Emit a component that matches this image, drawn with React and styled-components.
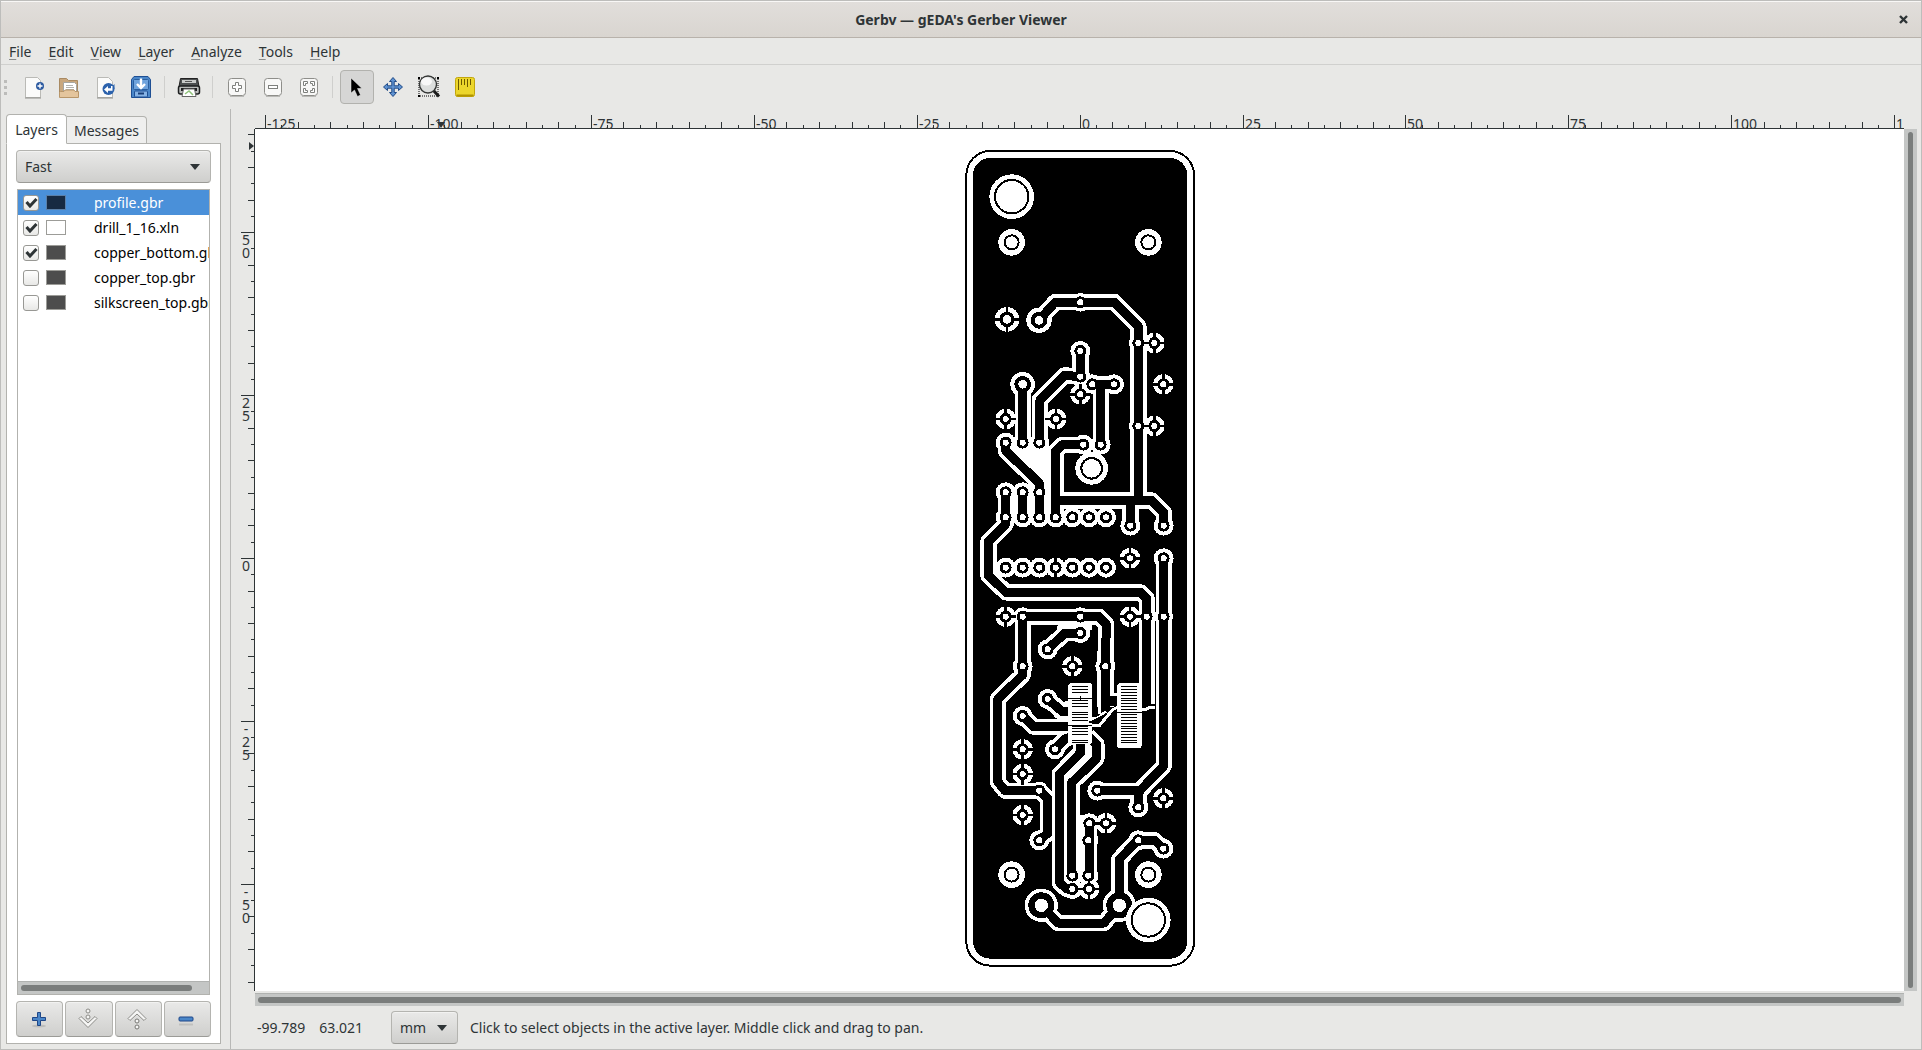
import React, { useState } from "react";
import styled, { createGlobalStyle, css } from "styled-components";

const GlobalStyle = createGlobalStyle`
  *, *::before, *::after { box-sizing: border-box; }
  html, body, #root { height: 100%; }
  body {
    margin: 0;
    overflow: hidden;
    font-family: "Noto Sans", "Open Sans", sans-serif;
    font-size: 14px;
    line-height: 20px;
    color: #2e3436;
  }
  button, select, input { font: inherit; color: inherit; margin: 0; }
`;

const line = "#b2b2ae";

const Window = styled.div`
  height: 100%;
  display: flex;
  flex-direction: column;
  background: #e8e8e6;
  border: 1px solid #bdbdbb;
`;

const TitleBar = styled.header`
  display: grid;
  grid-template-columns: 36px 1fr 36px;
  align-items: center;
  height: 37px;
  border-top: 1px solid #f8f7f6;
  border-bottom: 1px solid #b8b2ab;
  background: linear-gradient(#e1dedb, #d9d5d0);
`;

const Title = styled.h1`
  grid-column: 2;
  margin: 0;
  font-size: 14px;
  line-height: 20px;
  font-weight: 700;
  text-align: center;
`;

const CloseButton = styled.button`
  display: flex;
  align-items: center;
  justify-content: center;
  height: 32px;
  padding: 0;
  border: 0;
  background: none;
`;

const MenuBar = styled.nav`
  display: flex;
  gap: 1px;
  height: 27px;
  align-items: center;
  border-bottom: 1px solid #d0d0ce;
`;

const MenuButton = styled.button`
  padding: 4px 8px 2px;
  border: 0;
  background: none;
`;

const Mnemonic = styled.u`
  text-decoration-color: #8a8d8d;
  text-decoration-thickness: 1px;
  text-underline-offset: 2px;
`;

const ToolBar = styled.div`
  display: flex;
  align-items: center;
  height: 44px;
`;

const Grip = styled.div`
  display: grid;
  gap: 3px;
  width: 14px;
  padding-left: 3px;
`;

const GripDot = styled.span`
  width: 3px;
  height: 3px;
  background: #bcbcba;
`;

const ToolButton = styled.button`
  display: flex;
  align-items: center;
  justify-content: center;
  width: 34px;
  height: 34px;
  margin: 0 1px;
  padding: 0;
  border: 1px solid ${(p) => (p.$active ? line : "transparent")};
  border-radius: 4px;
  background: ${(p) => (p.$active ? "#d6d6d5" : "none")};
`;

const ToolSeparator = styled.span`
  width: 1px;
  height: 22px;
  margin: 0 6px 0 5px;
  background: #cfcfcd;
`;

const Body = styled.div`
  flex: 1;
  min-height: 0;
  display: grid;
  grid-template-columns: 230px 1fr;
`;

const SidePanel = styled.aside`
  display: flex;
  flex-direction: column;
  min-height: 0;
  padding: 5px 9px 5px 5px;
  border-right: 1px solid #b8b8b6;
`;

const TabStrip = styled.div`
  display: flex;
  align-items: flex-end;
  height: 30px;
  margin-bottom: -1px;
  z-index: 1;
`;

const Tab = styled.button`
  height: ${(p) => (p.$active ? 30 : 28)}px;
  width: ${(p) => p.$width}px;
  padding: 2px 0 0;
  border: 1px solid ${line};
  border-bottom-color: ${(p) => (p.$active ? "#fff" : line)};
  border-left-width: ${(p) => (p.$active ? 1 : 0)}px;
  border-radius: ${(p) => (p.$active ? "4px 4px 0 0" : "0 4px 0 0")};
  background: ${(p) => (p.$active ? "#fff" : "#efefee")};
`;

const TabPage = styled.section`
  flex: 1;
  min-height: 0;
  display: flex;
  flex-direction: column;
  gap: 6px;
  padding: 6px 9px;
  border: 1px solid ${line};
  background: #fff;
`;

const raised = css`
  border: 1px solid #b4b4b0;
  border-bottom-color: #9b9b97;
  border-radius: 4px;
  background: linear-gradient(#e9e9e8, #cfcfcd);
  box-shadow: inset 0 1px 0 #f2f2f1;
`;

const ComboBox = styled.span`
  position: relative;
  display: inline-flex;
`;

const ComboSelect = styled.select`
  ${raised}
  appearance: none;
  width: ${(p) => p.$width};
  height: 33px;
  padding: 0 28px 0 8px;
`;

const ComboArrow = styled.svg`
  position: absolute;
  right: 11px;
  top: 14px;
  pointer-events: none;
`;

const ListFrame = styled.div`
  flex: 1;
  min-height: 0;
  display: flex;
  flex-direction: column;
  margin: 0 1px;
  border: 1px solid ${line};
`;

const LayerList = styled.ul`
  flex: 1;
  margin: 0;
  padding: 0;
  list-style: none;
  overflow: hidden;
`;

const LayerRow = styled.li`
  display: grid;
  grid-template-columns: 16px 20px 1fr;
  column-gap: 7px;
  align-items: center;
  height: 25px;
  padding-left: 5px;
  white-space: nowrap;
  color: ${(p) => (p.$selected ? "#fff" : "#000")};
  background: ${(p) => (p.$selected ? "#4a90d9" : "none")};
`;

const LayerName = styled.label`
  padding-left: 21px;
`;

const CheckHolder = styled.span`
  position: relative;
  display: flex;
`;

const CheckBox = styled.input`
  appearance: none;
  width: 16px;
  height: 16px;
  border: 1px solid #989894;
  border-radius: 3px;
  background: linear-gradient(#fff, #e8e8e6);
`;

const CheckMark = styled.svg`
  position: absolute;
  left: 2px;
  top: 2px;
  pointer-events: none;
`;

const Swatch = styled.button`
  height: 15px;
  padding: 0;
  border: 1px solid ${(p) => (p.$selected ? "#5a7fa8" : "#9c9c98")};
  background: ${(p) => p.$color};
`;

const ScrollTrack = styled.div`
  display: flex;
  background: #c4c6c5;
  border-top: ${(p) => (p.$vertical ? 0 : 1)}px solid #b0b2b0;
  padding: ${(p) => (p.$vertical ? "3px 4px" : "3px")};
  height: ${(p) => (p.$vertical ? "auto" : "13px")};
`;

const ScrollThumb = styled.div`
  flex: 1;
  margin-right: ${(p) => p.$rest || 0}px;
  border-radius: 3px;
  background: #7a7d7c;
`;

const ButtonRow = styled.div`
  display: grid;
  grid-template-columns: repeat(4, 1fr);
  gap: 2px;
`;

const ActionButton = styled.button`
  ${raised}
  display: flex;
  align-items: center;
  justify-content: center;
  height: 36px;
  padding: 0 2px 0 0;
`;

const Workspace = styled.main`
  display: flex;
  flex-direction: column;
  min-width: 0;
  min-height: 0;
  padding: 0 4px 0 10px;
`;

const Viewer = styled.div`
  flex: 1;
  min-height: 0;
  display: grid;
  grid-template-columns: 14px minmax(0, 1fr) 13px;
  grid-template-rows: 20px minmax(0, 1fr) 15px;
`;

const RulerX = styled.div`
  grid-area: 1 / 2;
  display: flex;
  justify-content: center;
  overflow: hidden;
  border-bottom: 1px solid #2e3436;
`;

const RulerY = styled.div`
  grid-area: 2 / 1;
  display: flex;
  align-items: center;
  overflow: hidden;
  border-right: 1px solid #2e3436;
`;

const RulerDrawing = styled.svg`
  flex: none;
  font-family: "Noto Sans", sans-serif;
  font-size: 14px;
  fill: #2e3436;
`;

const Canvas = styled.div`
  grid-area: 2 / 2;
  display: flex;
  align-items: center;
  justify-content: center;
  overflow: hidden;
  background: #fff;
`;

const BoardDrawing = styled.svg`
  flex: none;
`;

const SideScroll = styled(ScrollTrack)`
  grid-area: 2 / 3;
`;

const BottomScroll = styled(ScrollTrack)`
  grid-area: 3 / 2;
  align-self: end;
`;

const StatusBar = styled.footer`
  display: flex;
  align-items: center;
  height: 43px;
  padding-left: 16px;
`;

const Coordinates = styled.output`
  display: flex;
  gap: 14px;
  width: 134px;
`;

const StatusText = styled.span`
  padding-left: 12px;
`;

/* ---------- icons ---------- */

const Icon = ({ size = 24, children }) => (
  <svg width={size} height={size} viewBox="0 0 24 24" fill="none" aria-hidden="true">
    {children}
  </svg>
);

const NewIcon = () => (
  <Icon>
    <path d="M4.500 2.500h12l3 3V22.500h-15z" fill="#fbfbfa" stroke="#babab6" />
    <path d="M4 23h16" stroke="#8f8f8b" />
    <circle cx="19" cy="11" r="4" fill="#2c5aa0" />
    <path d="M19 8.500v5M16.500 11h5" stroke="#fff" strokeWidth="1.400" />
  </Icon>
);

const OpenIcon = () => (
  <Icon>
    <path d="M2.500 20V3.500h7l2 2h9V20z" fill="#c9a77d" stroke="#a98a62" />
    <path d="M6.500 7.500h11l2 2V20h-13z" fill="#fff" stroke="#a5a5a1" />
    <path d="M9 10.500h7M9 12.500h8M9 14.500h8" stroke="#b4b4b0" />
    <path d="M2.500 17.500l1-1H7l1-1.500h9l1 1.500h3.500v6h-19z" fill="#e4c59d" stroke="#b8966a" />
  </Icon>
);

const RevertIcon = () => (
  <Icon>
    <path d="M4.500 2.500h11l4 4V22.500h-15z" fill="#fbfbfa" stroke="#babab6" />
    <path d="M4 23h16" stroke="#8f8f8b" />
    <circle cx="15.500" cy="14" r="6" fill="#2c62ac" />
    <path d="M21.500 9v5h-5z" fill="#2c62ac" />
    <path d="M11 14.500l4-3.500v2.300h3V11h1.500v4.800H15V18z" fill="#fff" />
  </Icon>
);

const SaveIcon = () => (
  <Icon>
    <path d="M5 1.500h14l2.500 3v18h-19v-18z" fill="#4a86c8" stroke="#1f4f93" />
    <rect x="4.500" y="4.500" width="15" height="10" rx="1" fill="#6fa3dc" stroke="#2b5f9f" />
    <path d="M12 3.500V12M8 9l4 4 4-4" stroke="#fff" strokeWidth="2.400" />
    <rect x="5.500" y="16" width="13" height="6" rx="1" fill="#86b3e5" stroke="#1f4f93" />
    <path d="M9 18.500h6" stroke="#1a3f78" strokeWidth="2" />
  </Icon>
);

const PrintIcon = () => (
  <Icon>
    <path d="M3.500 3.500h17l1.500 8H2z" fill="#4c4f50" stroke="#222" />
    <path d="M5 5h14v3H5z" fill="#c8cac9" />
    <path d="M8 6.500h7" stroke="#555" />
    <rect x="1.500" y="11" width="21" height="8" rx="2" fill="#b9bbb9" stroke="#1d1f20" strokeWidth="1.500" />
    <path d="M4 13h16v3H4z" fill="#1d1f20" />
    <path d="M6.500 14h11l1.500 7.500H5z" fill="#fff" stroke="#666" />
    <path d="M8 19l4-3 4 4" stroke="#8fc27a" strokeWidth="1.500" />
  </Icon>
);

const Plate = () => (
  <>
    <rect x="3.500" y="3.500" width="17" height="17" rx="3" fill="#f8f8f7" stroke="#8e8e8a" />
    <path d="M5 21.500h14" stroke="#b9b9b6" />
  </>
);

const ZoomInIcon = () => (
  <Icon><Plate /><path d="M10.500 7.500h3v3h3v3h-3v3h-3v-3h-3v-3h3z" fill="#fff" stroke="#7e807d" /></Icon>
);
const ZoomOutIcon = () => (
  <Icon><Plate /><rect x="7.500" y="10.500" width="9" height="3" fill="#fff" stroke="#7e807d" /></Icon>
);
const ZoomFitIcon = () => (
  <Icon>
    <Plate />
    <path d="M6.500 10.500v-4h4v2h-2v2zM13.500 6.500h4v4h-2v-2h-2zM17.500 13.500v4h-4v-2h2v-2zM10.500 17.500h-4v-4h2v2h2z" fill="#fff" stroke="#7e807d" />
  </Icon>
);

const PointerIcon = () => (
  <Icon>
    <path d="M6 3v15l3.500-3 3 6.500 3-1.500-3-6.500H17z" fill="#000" stroke="#eee" strokeWidth=".5" />
  </Icon>
);

const MoveIcon = () => (
  <Icon>
    <path
      d="M12 2.500l3.500 4h-2.300v4.300h4.300V8.500l4 3.500-4 3.500v-2.300h-4.300v4.300h2.300L12 21.500l-3.500-4h2.300v-4.300H6.500v2.300l-4-3.500 4-3.500v2.300h4.300V6.500H8.500z"
      fill="#5f93d2" stroke="#204a87" strokeLinejoin="round"
    />
  </Icon>
);

const ZoomAreaIcon = () => (
  <Icon>
    <path d="M2 3h19v18H2z" stroke="#000" strokeDasharray="1 1" />
    <path d="M1 2h2v2H1zM20 2h2v2h-2zM1 20h2v2H1z" fill="#000" />
    <path d="M16.500 15.500l5.500 6" stroke="#1b1b1b" strokeWidth="3" />
    <circle cx="11" cy="9.500" r="8.500" fill="#dcdedd" stroke="#343635" strokeWidth="1.400" />
    <ellipse cx="9.500" cy="6.500" rx="5.500" ry="4" fill="#f8f8f8" />
  </Icon>
);

const MeasureIcon = () => (
  <Icon>
    <rect x="2.500" y="2.500" width="19" height="19" rx="2" fill="#ecd62c" stroke="#c2a60c" />
    <path d="M3.500 20.500h17" stroke="#b29400" strokeWidth="2" />
    <path d="M5.500 4v11M8.500 4v6M11.500 4v6M14.500 4v8M17.500 4v6" stroke="#6d5a00" />
  </Icon>
);

const PlusIcon = () => (
  <Icon>
    <ellipse cx="12" cy="19" rx="7" ry="1.500" fill="#bcbcba" />
    <path d="M10.500 5.500h3v5h5v3h-5v5h-3v-5h-5v-3h5z" fill="#4a86c8" stroke="#1f4788" strokeLinejoin="round" />
  </Icon>
);
const MinusIcon = () => (
  <Icon>
    <path d="M5 17.500h14" stroke="#c0c0be" strokeWidth="2" />
    <rect x="5" y="10" width="14" height="4" rx="1" fill="#4a86c8" stroke="#1f4788" />
  </Icon>
);
const chevron = "M3 11.500l2-2 7 6.500 7-6.500 2 2-9 9z";
const DownIcon = () => (
  <Icon>
    <path d={chevron} fill="#f6f6f5" stroke="#8b8b87" strokeLinejoin="round" />
    <circle cx="12" cy="4" r="2" fill="#f6f6f5" stroke="#8b8b87" />
    <circle cx="12" cy="10" r="2" fill="#f6f6f5" stroke="#8b8b87" />
  </Icon>
);
const UpIcon = () => (
  <Icon>
    <g transform="matrix(1 0 0 -1 0 23)">
      <path d={chevron} fill="#f6f6f5" stroke="#8b8b87" strokeLinejoin="round" />
    </g>
    <circle cx="12" cy="14" r="2" fill="#f6f6f5" stroke="#777773" />
    <circle cx="12" cy="20" r="2" fill="#f6f6f5" stroke="#777773" />
  </Icon>
);

/* ---------- rulers ---------- */

const TICK = 16.29;
const span = (from, to) => Array.from({ length: to - from + 1 }, (_, i) => from + i);
const tickLength = (n, major) => (n % 10 === 0 ? major : n % 2 === 0 ? 6 : 3);

function HorizontalRuler() {
  const at = (n) => Math.round(1200.6 + n * TICK);
  const ticks = span(-50, 50);
  return (
    <RulerX>
      <RulerDrawing width="2401" height="19" aria-label="Horizontal ruler">
        {ticks.map((n) => {
          const h = tickLength(n, 13);
          return <rect key={n} x={at(n)} y={19 - h} width="1" height={h} />;
        })}
        {ticks.filter((n) => n % 10 === 0).map((n) => (
          <text key={n} x={at(n) + 2} y="20">{n * 2.5}</text>
        ))}
        <path d="M558 13h8l-4 6z" />
      </RulerDrawing>
    </RulerX>
  );
}

function VerticalRuler() {
  const at = (n) => Math.round(898 - n * TICK);
  const ticks = span(-26, 26);
  return (
    <RulerY>
      <RulerDrawing width="13" height="1800" aria-label="Vertical ruler">
        {ticks.map((n) => {
          const w = tickLength(n, 13);
          return <rect key={n} x={13 - w} y={at(n)} width={w} height="1" />;
        })}
        {ticks.filter((n) => n % 10 === 0).map((n) =>
          String(n * 2.5).split("").map((ch, i) => (
            <text key={`${n}-${i}`} x="5" textAnchor="middle" y={at(n) + 13 + i * 13}>
              {ch}
            </text>
          ))
        )}
        <path d="M8 482v8l5-4z" />
      </RulerDrawing>
    </RulerY>
  );
}

/* ---------- circuit board ---------- */

const tracks = [
  "252,541 301,486 478,486 550,559 550,1081",
  "302,1132 302,933 323,914 385,914",
  "302,1081 590,1081 626,1117 626,1157",
  "526,1081 526,1157",
  "437,914 437,733",
  "412,733 477,733",
  "376,633 376,710 329,706 255,779 254,908",
  "203,733 203,908",
  "152,908 152,932 253,1030 253,1132",
  "152,1057 152,1132",
  "203,1057 203,1132",
  "152,1132 152,1152 100,1205 100,1306 153,1357 557,1357 575,1376 575,1692",
  "626,1255 626,1878 555,1952 427,1952",
  "550,1952 550,2002",
  "203,1430 432,1430 454,1453 451,1579 451,1700",
  "203,1430 203,1605 128,1678 128,1925 150,1952 253,1952 278,1975 278,2080 253,2101",
  "376,1479 330,1479 278,1528",
  "278,1677 322,1715 350,1715",
  "203,1728 235,1760 340,1760",
  "300,1828 330,1797 352,1790",
  "377,1812 377,1838 314,1902 314,2228 335,2247 352,2247",
  "398,1788 424,1812 424,1856 350,1928 350,2207",
  "402,2050 402,2207",
  "625,2126 599,2101 548,2101 493,2158 493,2296",
  "259,2296 309,2349 447,2349 493,2296",
];

const row = (y, xs) => xs.map((x) => [x, y]);
const vias = [
  [376, 633], [376, 710], [376, 487, 28], [550, 609, 28], [550, 858, 28],
  [412, 733], [477, 733], [385, 914], [437, 914],
  ...row(908, [152, 203, 253]),
  ...row(1057, [152, 203, 253]),
  ...row(1132, [152, 203, 253, 302, 352, 402, 453]),
  ...row(1283, [152, 203, 253, 302, 352, 402, 453]),
  [626, 1157], [526, 1157], [626, 1255],
  [203, 1430, 28], [376, 1430, 28], [575, 1430, 22], [626, 1430, 28],
  [203, 1579], [451, 1579], [376, 1479], [278, 1528],
  [278, 1677], [203, 1728], [300, 1828],
  [427, 1952], [550, 2002], [253, 1952, 27], [253, 2101],
  [403, 2050], [400, 2101], [352, 2207], [400, 2207], [352, 2247],
  [625, 2126], [550, 2101],
];

const largePads = [
  [252, 541, 38, 25, 13],
  [203, 733, 37, 25, 13],
  [259, 2296, 50, 39, 20],
  [493, 2296, 50, 39, 20],
];

const thermals = [
  [156, 538, 37], [598, 609], [625, 733], [598, 858], [152, 837], [303, 837],
  [376, 763], [525, 1255], [525, 1430], [152, 1430], [352, 1579], [203, 1828],
  [203, 1902], [203, 2025], [625, 1975], [453, 2050], [402, 2247],
];

const mountingHoles = [
  [170, 170, 67, 50], [580, 2340, 67, 50], [410, 985, 49, 31],
  [170, 307, 40, 21], [580, 307, 40, 21], [170, 2204, 40, 21], [580, 2204, 40, 21],
];

const voids = [
  "170,925 290,925 290,1130 266,1130 262,1020",
  "175,1057 280,1057 280,1140 175,1140",
  "310,1450 410,1450 410,1470 300,1485",
  "388,1812 412,1805 412,1850 330,1925 330,1895",
  "374,2026 400,2024 400,2215 374,2215",
  "285,1700 345,1680 350,1740 300,1735",
  "128,1268 478,1268 478,1290 128,1290",
];

const pinRows = Array.from({ length: 21 }, (_, i) => 1640 + Math.round(i * 8.4));

function Board() {
  return (
    <BoardDrawing width="251" height="840" viewBox="-3 0 753 2520" shapeRendering="crispEdges" role="img" aria-label="Circuit board">
      <rect x="34" y="33" width="683" height="2444" rx="72" fill="#fff" stroke="#000" strokeWidth="6" />
      <rect x="54" y="54" width="643" height="2402" rx="52" fill="#000" />
      <g fill="none" stroke="#fff" strokeWidth="49" strokeLinejoin="round">
        {tracks.map((t) => <polyline key={t} points={t} />)}
      </g>
      <g fill="#fff">
        {vias.map(([x, y, r = 30]) => <circle key={`${x}-${y}`} cx={x} cy={y} r={r} />)}
        {largePads.map(([x, y, r]) => <circle key={`${x}-${y}`} cx={x} cy={y} r={r} />)}
        {thermals.map(([x, y, r = 31]) => <circle key={`${x}-${y}`} cx={x} cy={y} r={r} />)}
        {voids.map((v) => <polygon key={v} points={v} />)}
      </g>
      <g stroke="#000" strokeWidth="8">
        {thermals.map(([x, y, r = 31]) => (
          <path key={`${x}-${y}`} d={`M${x - r - 1} ${y}h${2 * r + 2}M${x} ${y - r - 1}v${2 * r + 2}`} />
        ))}
        <path d="M302 1250v66" />
      </g>
      <g fill="none" stroke="#000" strokeWidth="27" strokeLinejoin="round">
        {tracks.map((t) => <polyline key={t} points={t} />)}
      </g>
      <g fill="#000">
        {vias.map(([x, y]) => <circle key={`${x}-${y}`} cx={x} cy={y} r="18" />)}
        {largePads.map(([x, y, , r]) => <circle key={`${x}-${y}`} cx={x} cy={y} r={r} />)}
        {thermals.map(([x, y, r]) => <circle key={`${x}-${y}`} cx={x} cy={y} r={r ? 23 : 18} />)}
        <path d="M462 1668h25v30h-25z" />
      </g>
      <g fill="#fff">
        {vias.map(([x, y]) => <circle key={`${x}-${y}`} cx={x} cy={y} r="9" />)}
        {largePads.map(([x, y, , , r]) => <circle key={`${x}-${y}`} cx={x} cy={y} r={r} />)}
        {thermals.map(([x, y, r]) => <circle key={`${x}-${y}`} cx={x} cy={y} r={r ? 13 : 9} />)}
        <rect x="340" y="1630" width="72" height="182" rx="8" />
        <rect x="487" y="1630" width="73" height="194" rx="8" />
      </g>
      <g fill="none" stroke="#fff" strokeWidth="9">
        <path d="M405 1735h22l26-20M405 1757h28l40-48 16-8M433 1680v42" />
        <path d="M556 1707h18l12-6h14M468 1650v14h22" />
      </g>
      <g stroke="#000" strokeWidth="3">
        {pinRows.map((y, i) => (i % 5 === 3 ? null : <path key={y} d={`M352 ${y}h46`} />))}
        {pinRows.map((y) => <path key={y} d={`M498 ${y}h49`} />)}
        <path d="M340 1676h72M376 1668v16M330 1757h80M487 1716h74" />
        <path d="M402 1746h26l26-26" strokeWidth="5" />
      </g>
      <g fill="#fff" stroke="#000" strokeWidth="6">
        {mountingHoles.map(([x, y, clear, r]) => (
          <g key={`${x}-${y}`}>
            <circle cx={x} cy={y} r={clear} stroke="none" />
            <circle cx={x} cy={y} r={r} />
          </g>
        ))}
      </g>
    </BoardDrawing>
  );
}

/* ---------- application ---------- */

const menus = ["File", "Edit", "View", "Layer", "Analyze", "Tools", "Help"];

const toolGroups = [
  [["New", NewIcon], ["Open", OpenIcon], ["Revert", RevertIcon], ["Save", SaveIcon]],
  [["Print", PrintIcon]],
  [["Zoom in", ZoomInIcon], ["Zoom out", ZoomOutIcon], ["Zoom to fit", ZoomFitIcon]],
  [["Select", PointerIcon], ["Pan", MoveIcon], ["Zoom area", ZoomAreaIcon], ["Measure", MeasureIcon]],
];

const initialLayers = [
  { name: "profile.gbr", color: "#172a42", visible: true },
  { name: "drill_1_16.xln", color: "#ffffff", visible: true },
  { name: "copper_bottom.gbr", color: "#4d4d4d", visible: true },
  { name: "copper_top.gbr", color: "#4d4d4d", visible: false },
  { name: "silkscreen_top.gbr", color: "#4d4d4d", visible: false },
];

const layerActions = [
  ["Add layer", PlusIcon], ["Move layer down", DownIcon], ["Move layer up", UpIcon], ["Remove layer", MinusIcon],
];

function Combo({ label, width, options }) {
  return (
    <ComboBox>
      <ComboSelect aria-label={label} $width={width}>
        {options.map((o) => <option key={o}>{o}</option>)}
      </ComboSelect>
      <ComboArrow width="10" height="6" aria-hidden="true">
        <path d="M0 0h10L5 6z" fill="#2e3436" />
      </ComboArrow>
    </ComboBox>
  );
}

export default function App() {
  const [layers, setLayers] = useState(initialLayers);
  const [tool, setTool] = useState("Select");
  const toggle = (name) =>
    setLayers(layers.map((l) => (l.name === name ? { ...l, visible: !l.visible } : l)));

  return (
    <Window>
      <GlobalStyle />
      <TitleBar>
        <Title>Gerbv — gEDA's Gerber Viewer</Title>
        <CloseButton aria-label="Close">
          <svg width="9" height="9" aria-hidden="true">
            <path d="M1 1l7 7M8 1l-7 7" stroke="#2e3436" strokeWidth="2.400" />
          </svg>
        </CloseButton>
      </TitleBar>
      <MenuBar>
        {menus.map((m) => (
          <MenuButton key={m}><Mnemonic>{m[0]}</Mnemonic>{m.slice(1)}</MenuButton>
        ))}
      </MenuBar>
      <ToolBar role="toolbar">
        <Grip><GripDot /><GripDot /><GripDot /></Grip>
        {toolGroups.map((group, i) => (
          <React.Fragment key={i}>
            {i > 0 && <ToolSeparator />}
            {group.map(([name, Glyph]) => (
              <ToolButton key={name} aria-label={name} $active={tool === name} onClick={() => setTool(name)}>
                <Glyph />
              </ToolButton>
            ))}
          </React.Fragment>
        ))}
      </ToolBar>
      <Body>
        <SidePanel>
          <TabStrip role="tablist">
            <Tab role="tab" aria-selected="true" $active $width={61}>Layers</Tab>
            <Tab role="tab" aria-selected="false" $width={80}>Messages</Tab>
          </TabStrip>
          <TabPage>
            <Combo label="Rendering" width="100%" options={["Fast", "Normal", "High quality"]} />
            <ListFrame>
              <LayerList>
                {layers.map((l, i) => (
                  <LayerRow key={l.name} $selected={i === 0}>
                    <CheckHolder>
                      <CheckBox type="checkbox" id={l.name} checked={l.visible} onChange={() => toggle(l.name)} />
                      {l.visible && (
                        <CheckMark width="13" height="11" aria-hidden="true">
                          <path d="M1.500 5l3.500 4 6.500-7" fill="none" stroke="#2e3436" strokeWidth="3" />
                        </CheckMark>
                      )}
                    </CheckHolder>
                    <Swatch aria-label={`Color of ${l.name}`} $color={l.color} $selected={i === 0} />
                    <LayerName htmlFor={l.name}>{l.name}</LayerName>
                  </LayerRow>
                ))}
              </LayerList>
              <ScrollTrack><ScrollThumb $rest={14} /></ScrollTrack>
            </ListFrame>
            <ButtonRow>
              {layerActions.map(([name, Glyph]) => (
                <ActionButton key={name} aria-label={name}><Glyph /></ActionButton>
              ))}
            </ButtonRow>
          </TabPage>
        </SidePanel>
        <Workspace>
          <Viewer>
            <HorizontalRuler />
            <VerticalRuler />
            <Canvas><Board /></Canvas>
            <SideScroll $vertical><ScrollThumb /></SideScroll>
            <BottomScroll><ScrollThumb /></BottomScroll>
          </Viewer>
          <StatusBar>
            <Coordinates><span>-99.789</span><span>63.021</span></Coordinates>
            <Combo label="Unit" width="67px" options={["mm", "mil", "in"]} />
            <StatusText>Click to select objects in the active layer. Middle click and drag to pan.</StatusText>
          </StatusBar>
        </Workspace>
      </Body>
    </Window>
  );
}
